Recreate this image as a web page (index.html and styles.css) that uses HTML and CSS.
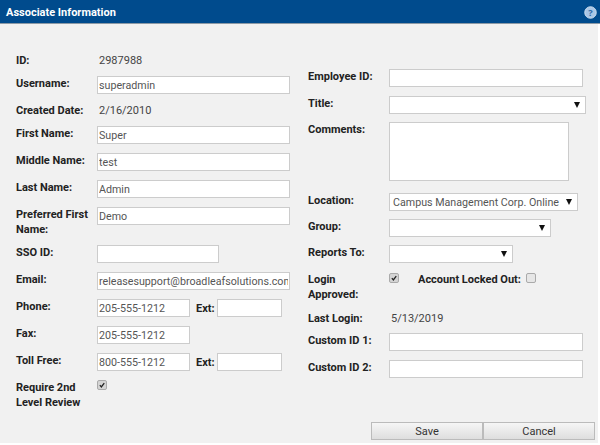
FILE: index.html
```html
<!DOCTYPE html>
<html>
<head>
<meta charset="utf-8">
<title>Associate Information</title>
<link rel="stylesheet" href="styles.css">
</head>
<body>
<div class="dialog">
  <header class="titlebar">
    <span class="title">Associate Information</span>
    <svg class="help" viewBox="0 0 14 14" width="13" height="13"><circle cx="7" cy="7" r="6.2" fill="#a9c6e6" stroke="#d5e3f2" stroke-width="1"/><text x="7" y="10.4" text-anchor="middle" class="help-q">?</text></svg>
  </header>
  <div class="columns">
    <div class="col col-left">
      <div class="row text-row"><label>ID:</label><span class="value">2987988</span></div>
      <div class="row"><label>Username:</label><input class="w-l" value="superadmin"></div>
      <div class="row text-row"><label>Created Date:</label><span class="value">2/16/2010</span></div>
      <div class="row"><label>First Name:</label><input class="w-l" value="Super"></div>
      <div class="row"><label>Middle Name:</label><input class="w-l" value="test"></div>
      <div class="row"><label>Last Name:</label><input class="w-l" value="Admin"></div>
      <div class="row tall"><label>Preferred First Name:</label><input class="w-l" value="Demo"></div>
      <div class="row"><label>SSO ID:</label><input class="w-m" value=""></div>
      <div class="row"><label>Email:</label><input class="w-l" value="releasesupport@broadleafsolutions.com"></div>
      <div class="row"><label>Phone:</label><input class="w-p" value="205-555-1212"><label class="ext">Ext:</label><input class="w-x" value=""></div>
      <div class="row"><label>Fax:</label><input class="w-p" value="205-555-1212"></div>
      <div class="row"><label>Toll Free:</label><input class="w-p" value="800-555-1212"><label class="ext">Ext:</label><input class="w-x" value=""></div>
      <div class="row"><label>Require 2nd Level Review</label><span class="check checked"><svg viewBox="0 0 10 10"><path d="M2.3 5.2 4.2 7.4 7.8 2.6" fill="none" stroke="#222" stroke-width="1.6"/></svg></span></div>
    </div>
    <div class="col col-right">
      <div class="row"><label>Employee ID:</label><input class="w-e" value=""></div>
      <div class="row narrow"><label>Title:</label><div class="select w-t"><span class="caret"></span></div></div>
      <div class="row comments-row"><label>Comments:</label><textarea class="comments"></textarea></div>
      <div class="row narrow"><label>Location:</label><div class="select w-loc"><span class="sel-text">Campus Management Corp. Online</span><span class="caret"></span></div></div>
      <div class="row narrow"><label>Group:</label><div class="select w-g"><span class="caret"></span></div></div>
      <div class="row"><label>Reports To:</label><div class="select w-r"><span class="caret"></span></div></div>
      <div class="row login"><label class="login-label">Login Approved:</label><span class="check checked"><svg viewBox="0 0 10 10"><path d="M2.3 5.2 4.2 7.4 7.8 2.6" fill="none" stroke="#222" stroke-width="1.6"/></svg></span><label class="locked">Account Locked Out:</label><span class="check"></span></div>
      <div class="row text-row"><label>Last Login:</label><span class="value">5/13/2019</span></div>
      <div class="row"><label>Custom ID 1:</label><input class="w-e" value=""></div>
      <div class="row"><label>Custom ID 2:</label><input class="w-e" value=""></div>
    </div>
  </div>
  <div class="buttons">
    <button>Save</button><button>Cancel</button>
  </div>
</div>
</body>
</html>
```
FILE: styles.css
```css
* { box-sizing: border-box; }
html, body { margin: 0; padding: 0; background: #fff; }
body { width: 600px; height: 445px; overflow: hidden; font-family: Roboto, "Open Sans", sans-serif; font-size: 11px; color: #333; }
.dialog { width: 598px; height: 443px; background: #f1f1f1; display: flex; flex-direction: column; }
.titlebar { width: 600px; height: 24px; flex: none; background: #004b8d; border-bottom: 1px solid #8d9aa6; display: flex; align-items: center; justify-content: space-between; padding: 1px 3px 0 6px; }
.title { color: #fff; font-weight: 700; font-size: 11px; }
.help-q { font-size: 10px; font-weight: 700; fill: #2d6aa8; font-family: "Open Sans", sans-serif; }
.columns { display: flex; flex: 1; min-height: 0; }
.col { display: flex; flex-direction: column; }
.col-left { width: 308px; padding: 29px 0 0 16px; }
.col-right { padding: 45px 0 0 0; }
.row { display: flex; align-items: flex-start; margin-bottom: 9px; }
.row label { width: 81px; flex: none; font-weight: 700; color: #222; line-height: 15px; }
.col-left .tall { margin-bottom: 8px; }
.text-row { height: 16px; }
.col-left .text-row { margin-bottom: 7px; }
.col-right .text-row { margin-bottom: 6px; }
.value { color: #444; padding-left: 2px; line-height: 15px; }
input, textarea { height: 18px; border: 1px solid #ccc; background: #fff; font: inherit; font-size: 10.7px; color: #555; padding: 0 1px; margin: 0; border-radius: 0; display: block; outline: none; }
.w-l { width: 193px; }
.w-m { width: 122px; }
.w-p { width: 93px; }
.w-x { width: 65px; }
.w-e { width: 194px; }
.row label.ext { width: 21px; margin: 2px 0 0 6px; }
.select { height: 18px; background: #fff; border: 1px solid #ccc; display: flex; align-items: center; padding: 0 3px; color: #555; font-size: 10.7px; }
.sel-text { white-space: nowrap; }
.caret { margin-left: auto; margin-right: 2px; width: 0; height: 0; border-left: 3px solid transparent; border-right: 3px solid transparent; border-top: 6px solid #111; }
.w-t { width: 197px; }
.w-loc { width: 189px; }
.w-g { width: 162px; }
.w-r { width: 124px; }
.comments { width: 180px; height: 59px; resize: none; }
.narrow { margin-bottom: 8px; }
.comments-row { margin-bottom: 12px; }
.check { width: 10px; height: 10px; flex: none; background: #e6e6e6; border: 1px solid #aaa; border-radius: 2px; display: block; }
.check svg { display: block; width: 8px; height: 8px; }
.checked { background: #d4d4d4; }
.login { height: 30px; }
.login .check { margin-top: 1px; }
.row label.login-label { padding-right: 12px; }
.row label.locked { width: auto; margin: 0 5px 0 19px; }
.buttons { flex: none; display: flex; justify-content: flex-end; padding: 0 3px 3px 0; }
button { width: 112px; height: 18px; padding: 0; border: 1px solid #bbb; background: linear-gradient(#f6f6f6, #dedede); font: inherit; color: #333; }
```
